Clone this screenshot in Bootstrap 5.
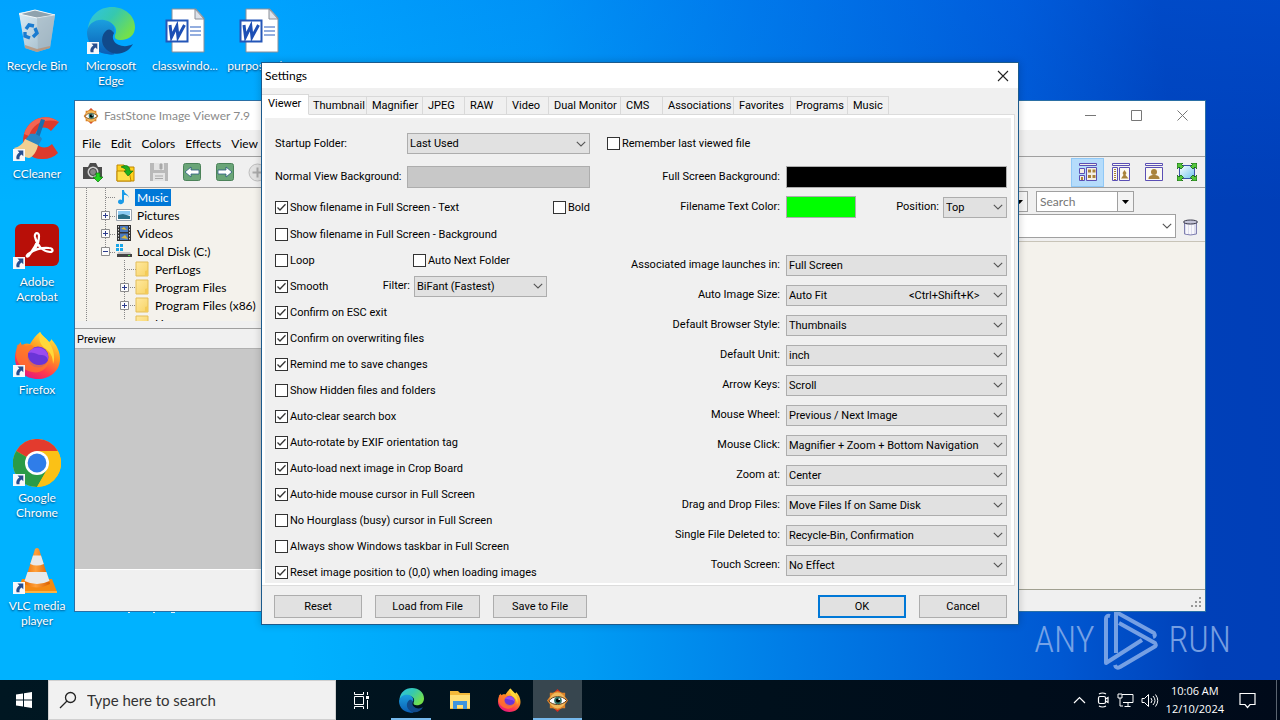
<!DOCTYPE html>
<html lang="en">
<head>
<meta charset="utf-8">
<meta name="viewport" content="width=device-width, initial-scale=1">
<title>Desktop - FastStone Image Viewer Settings</title>
<link href="https://cdn.jsdelivr.net/npm/bootstrap@5.3.0/dist/css/bootstrap.min.css" rel="stylesheet">
<style>
  body { font: 12px/15px Lato, "Open Sans", sans-serif; color: #000; background: #001420; }
  svg { display: block; flex: none; }
  button { padding: 0; border: 0; background: none; color: inherit; font: inherit; }

  /* desktop */
  .desk { min-height: 680px; background:
      linear-gradient(180deg, rgba(0,110,255,.22) 0, rgba(0,110,255,0) 30%),
      linear-gradient(86deg, #00b2ff 0, #00b2ff 22%, #009cf4 44%, #007ce6 60%, #0058d2 80%, #0040b8 91%, #003eb8 100%); }
  .desk-icons { display: grid; grid-template-columns: repeat(4, 74px); grid-template-rows: repeat(6, 108px); grid-auto-flow: column; }
  .desk-icon { padding-top: 7px; color: #fff; text-align: center; text-decoration: none; text-shadow: 0 1px 2px rgba(0,20,60,.7); }
  .desk-icon svg { margin: 0 auto 3px; }
  .desk-icon span { display: block; }
  .hidden-label { left: 128px; top: 610px; }

  /* image viewer window */
  .viewer { top: 100px; left: 74px; right: 74px; background: #f0f0f0; border: 1px solid #2a6fa5; }
  .viewer .bar-title { height: 29px; background: #fff; color: #8a8a8a; padding-left: 8px; gap: 5px; }
  .win-btn { width: 46px; height: 28px; display: flex; align-items: center; justify-content: center; }
  .viewer .bar-menu { height: 27px; border-bottom: 1px solid #a0a0a0; padding-left: 1px; }
  .viewer .bar-menu button { padding: 0 6px; }
  .viewer .bar-tools { height: 31px; border-bottom: 1px solid #a0a0a0; padding: 0 2px 0 1px; }
  .tool-btn { width: 33px; height: 29px; display: flex; align-items: center; justify-content: center; }
  .tool-btn.on { background: #b5dcfb; border: 1px solid #90c8f6; }
  .side { width: 300px; border-right: 1px solid #a0a0a0; }
  .tree { height: 133px; overflow: hidden; background: #f4f2ec; position: relative; }
  .tree ul { position: relative; }
  .tree li { display: flex; align-items: center; height: 18px; padding-left: 26px; }
  .tree li.deep { padding-left: 45px; }
  .tree li .exp { width: 9px; margin-right: 6px; }
  .tree li.deep .exp { margin-right: 5px; }
  .tree li .lbl { padding: 1px 2px; margin-left: 3px; height: 17px; }
  .tree li .lbl.sel { background: #0078d7; color: #fff; }
  .side .cap { height: 21px; border-top: 1px solid #a0a0a0; border-bottom: 1px solid #b0b0b0; margin-top: 7px; padding: 4px 2px 2px; font: 11px/14px Roboto, sans-serif; }
  .prev { height: 221px; background: #c8c8c8; border-bottom: 1px solid #fff; }
  .side .under { height: 20px; }
  .search-row { height: 24px; padding: 3px 47px 0 0; }
  .search-row input { width: 82px; height: 21px; border: 1px solid #a0a0a0; border-radius: 0; padding: 0 3px; font: inherit; background: #fff; }
  .search-row input::placeholder { color: #757575; }
  .drop { width: 16px; height: 21px; border: 1px solid #a0a0a0; border-left: 0; display: flex; align-items: center; justify-content: center; background: #f4f4f4; }
  .path-row { height: 30px; padding-top: 2px; border-bottom: 1px solid #c8c4b8; }
  .path-row select { height: 24px; border: 1px solid #a0a0a0; border-radius: 0; flex: 1; appearance: none; background: #fff; }
  .path-row button { width: 29px; display: flex; align-items: center; justify-content: center; }
  .files { background: #f4f2ec; border-bottom: 1px solid #a0a090; }
  .status { height: 21px; }

  /* settings dialog */
  .dlg { top: 62px; left: 261px; right: 261px; margin: 0 auto; max-width: 900px; background: #f0f0f0; border: 1px solid #1c5a8c; font: 11px/14px Roboto, "Open Sans", sans-serif; box-shadow: 0 0 8px rgba(0,0,0,.2); }
  .dlg .bar-title { height: 25px; background: #fff; padding: 0 9px 0 3px; font: 12px/15px Lato, sans-serif; }
  .dlg .nav-tabs { border: 0; padding-top: 6px; align-items: flex-end; margin-bottom: -1px; position: relative; flex-wrap: nowrap; }
  .dlg .nav-tabs .nav-link { height: 19px; margin: 0; border: 1px solid #d9d9d9; border-left: 0; border-radius: 0; padding: 0 5px; min-width: 42px; color: #000; text-align: left; white-space: nowrap; background: #f0f0f0; }
  .dlg .nav-tabs .nav-link.active { height: 21px; min-width: 47px; background: #fff; border-bottom-color: #fff; padding: 0 6px 2px; }
  .dlg .nav-tabs .nav-link.last { min-width: 40px; }
  .w57 { width: 57px; } .w58 { width: 58px; } .w72 { width: 72px; } .w56 { width: 56px; } .w71 { width: 71px; }
  .dlg .page { margin-right: 3px; border: 1px solid #dcdcdc; border-width: 1px 1px 1px 0; padding: 12px 7px 0 13px; box-shadow: inset 0 3px #fff, inset -3px 0 #fff, inset 0 -2px #fff, inset 3px 0 #fff; }
  .fields-left { width: 315px; }
  .fields-right { flex: 1; padding-left: 17px; }
  .r33 { height: 33px; } .r28 { height: 28px; } .r26 { height: 26px; } .r30 { height: 30px; }
  .gap-row { height: 29px; }
  .gap6 { gap: 6px; }
  .fields-left .first-lbl { width: 132px; }
  .dlg .form-check { padding: 0; margin: 0; min-height: 0; display: flex; align-items: center; gap: 2px; }
  .dlg .form-check label { padding-top: 1px; }
  .loop { width: 138px; }
  .dlg .form-check-input { float: none; margin: 0; width: 13px; height: 13px; border: 1px solid #333; border-radius: 0; background-color: #fff; flex: none; }
  .dlg .form-check-input:checked { background: #fff url("data:image/svg+xml,%3Csvg xmlns='http://www.w3.org/2000/svg' viewBox='0 0 11 11'%3E%3Cpath d='M1.5 5.5 4 8 9.5 2.3' fill='none' stroke='%23333' stroke-width='1.3'/%3E%3C/svg%3E") center/11px no-repeat; }
  .combo { height: 21px; padding: 1px 20px 0 2px; border: 1px solid #adadad; border-radius: 0; color: #000; font: inherit; appearance: none; background: #e1e1e1 url("data:image/svg+xml,%3Csvg xmlns='http://www.w3.org/2000/svg' viewBox='0 0 10 6'%3E%3Cpath d='M.8.8 5 5 9.2.8' fill='none' stroke='%23555' stroke-width='1.1'/%3E%3C/svg%3E") right 3px center/10px 6px no-repeat; }
  .path-row .white-combo { background: #fff url("data:image/svg+xml,%3Csvg xmlns='http://www.w3.org/2000/svg' viewBox='0 0 10 6'%3E%3Cpath d='M.8.8 5 5 9.2.8' fill='none' stroke='%23555' stroke-width='1.1'/%3E%3C/svg%3E") right 3px center/10px 6px no-repeat; }
  .w183 { width: 183px; } .w133 { width: 133px; } .w64 { width: 64px; } .w221 { width: 221px; }
  #filter { margin-right: 43px; }
  .swatch { height: 22px; border: 1px solid #adadad; }
  .sw-gray { background: #c8c8c8; } .sw-black { background: #000; } .sw-green { background: #0f0; width: 70px; }
  .dlg .foot { padding: 9px 11px 6px 12px; gap: 13px; }
  .push { height: 23px; background: #e1e1e1; border: 1px solid #adadad; border-radius: 0; padding: 0; font: inherit; color: #000; width: 88px; }
  .push.w105 { width: 105px; } .push.w94 { width: 94px; }
  .push.main { border: 2px solid #0078d7; }

  .brand { right: 49px; bottom: 8px; color: #93b5ec; opacity: .8; font: 300 36px/44px "Roboto Condensed", sans-serif; gap: 8px; }

  /* taskbar */
  .taskbar { height: 40px; background: linear-gradient(90deg, #001722, #00101c 60%, #000a1a); color: #fff; }
  .taskbar .start { width: 48px; }
  .taskbar .find { width: 288px; background: #f1f1f1; border: 1px solid #d0d0d0; padding-left: 10px; gap: 10px; margin-right: 1px; }
  .taskbar .find input { border: 0; background: none; outline: 0; font: 15px/20px Lato, sans-serif; width: 230px; padding: 0; }
  .taskbar .find input::placeholder { color: #333; opacity: 1; }
  .task { width: 49px; display: flex; align-items: center; justify-content: center; border-bottom: 2px solid transparent; border-top: 2px solid transparent; }
  .task.open { width: 40px; margin: 0 4px 0 5px; border-bottom-color: #76b9ed; }
  .task.current { background: #37464f; border-bottom-color: #76b9ed; }
  .tray { gap: 7px; padding-right: 3px; }
  .clock { font: 11px/18px "Open Sans", sans-serif; text-align: center; }
  .peek { border-left: 1px solid #5a6470; height: 40px; margin-left: 13px; }
</style>
</head>
<body class="d-flex flex-column min-vh-100 overflow-hidden">

<svg width="0" height="0" class="position-absolute" aria-hidden="true">
  <defs>
    <linearGradient id="gEdgeG" x1="0" y1="0" x2="1" y2=".6"><stop offset="0" stop-color="#2fc3e8"/><stop offset=".5" stop-color="#35c8b0"/><stop offset="1" stop-color="#74e04a"/></linearGradient>
    <linearGradient id="gEdgeB" x1="0" y1="0" x2="0" y2="1"><stop offset="0" stop-color="#1b9fdf"/><stop offset="1" stop-color="#0b5db4"/></linearGradient>
    <linearGradient id="gFox" x1=".8" y1="0" x2=".3" y2="1"><stop offset="0" stop-color="#fff14a"/><stop offset=".4" stop-color="#ff9a1f"/><stop offset=".75" stop-color="#ff3a4f"/><stop offset="1" stop-color="#e2167e"/></linearGradient>
    <linearGradient id="gFold" x1="0" y1="0" x2="1" y2="1"><stop offset="0" stop-color="#ffe9a0"/><stop offset="1" stop-color="#f7d365"/></linearGradient>
    <linearGradient id="gCone" x1="0" y1="0" x2="1" y2="0"><stop offset="0" stop-color="#e86a00"/><stop offset=".45" stop-color="#ffa03a"/><stop offset="1" stop-color="#d95f00"/></linearGradient>
    <linearGradient id="gBin" x1="0" y1="0" x2="1" y2="1"><stop offset="0" stop-color="#eef3f6"/><stop offset="1" stop-color="#aab7c0"/></linearGradient>
    <linearGradient id="gSky" x1="0" y1="0" x2="1" y2="1"><stop offset="0" stop-color="#fff"/><stop offset="1" stop-color="#6cc4ee"/></linearGradient>

    <symbol id="shortcut" viewBox="0 0 12 12"><path d="M0 0h12v12H0z" fill="#f6f8fb"/><path d="M4.500 1.500h5.800v5.800L8.500 5.500C6.600 6.700 6.200 8 6.600 10.300H3.600C2.600 7.200 4 5 6.400 3.400z" fill="#274e8e"/></symbol>
    <symbol id="edge" viewBox="0 0 48 48">
      <path d="M1 22C2 9 12 0 25 0c13 0 23 9 23 20 0 8-6 13-14 13-5 0-7-2-6-5 3-5 0-12-8-13C11 14 4 17 1 22z" fill="url(#gEdgeG)"/>
      <path d="M0 25c1-8 8-13 17-12 9 1 12 8 10 14-5-2-10 2-9 8 1 5 5 9 10 12-2 1-5 1-8 0C9 46 0 37 0 25z" fill="url(#gEdgeB)"/>
      <path d="M20 23c-7 5-7 17 3 22 8 4 18 1 23-8-7 4-16 2-19-3-2-3-1-6 0-8-3-4-5-4-7-3z" fill="#114a8b"/>
    </symbol>
    <symbol id="fox" viewBox="0 0 48 48">
      <path d="M27 1c2 4 6 6 9 10 2-1 2-2 2-3 6 6 9 13 9 20 0 12-10 20-22 20C12 48 2 39 2 27c0-6 2-12 6-16 0 2 0 3 1 4 2-3 5-3 8-2 3-5 6-9 10-12z" fill="url(#gFox)"/>
      <path d="M27 1c2 4 6 6 9 10 3 5 7 13 4 22 0-8-3-12-7-15-6-4-8-10-6-17z" fill="#ffd83a"/>
      <circle cx="25" cy="26" r="10.500" fill="#6a35d8"/><path d="M15 22c3-5 10-7 15-4 4 2 6 6 5 11-1-4-4-5-7-5-4 0-7-4-13-2z" fill="#9a4bf0"/>
      <path d="M4 14c3-1 6-1 9 1 3-1 5-2 8 1-1 3-5 3-6 6-1 6 4 12 11 12 4 0 8-2 10-5-1 9-9 14-17 12C9 39 3 31 3 24z" fill="#ff7a28" opacity=".75"/>
    </symbol>
    <symbol id="faststone" viewBox="0 0 24 24">
      <path d="M12 0l4 4H8zM12 24l4-4H8z" fill="#d22c1f"/><path d="M12 2l5 2h3v4l3 4-3 4v4h-3l-5 2-5-2H4v-4l-3-4 3-4V4h3z" fill="#dd8228"/><circle cx="12" cy="12" r="8.300" fill="#f0b95c"/>
      <path d="M3 12.500C7 6.500 17 6.500 21.500 12 17 17.500 7 17.500 3 12.500z" fill="#fff" stroke="#5a3413"/><circle cx="12.500" cy="12" r="4" fill="#2f7468"/><circle cx="12.500" cy="12" r="2.200" fill="#000"/><circle cx="13.800" cy="10.600" r=".9" fill="#fff"/>
    </symbol>
    <symbol id="word" viewBox="0 0 40 46">
      <path d="M7 1h24l8 9v34H7z" fill="#fff" stroke="#8a8f98"/><path d="M30 1v10h9z" fill="#dde2ea" stroke="#8a8f98"/>
      <path d="M25 19h11M25 23h11M25 27h11" stroke="#2b5fc0" stroke-width="1.200"/>
      <path d="M1.500 12.500h21v21h-21z" fill="#fff" stroke="#2456b8" stroke-width="2"/>
      <path d="M5 17l1.500 12L11.800 18l1.200 11L19.500 17" fill="none" stroke="#1d4fb5" stroke-width="3"/>
    </symbol>
    <symbol id="folder" viewBox="0 0 14 16"><path d="M1 1h12v14H1z" fill="url(#gFold)" stroke="#e3bd58"/><path d="M10 15V10l3-1v6z" fill="#f3cb58"/></symbol>
    <symbol id="plus" viewBox="0 0 9 9"><path d="M.5.5h8v8h-8z" fill="#fbfbfb" stroke="#8c8c8c"/><path d="M2 4.500h5M4.500 2v5" stroke="#2b3b8c"/></symbol>
    <symbol id="minus" viewBox="0 0 9 9"><path d="M.5.5h8v8h-8z" fill="#fbfbfb" stroke="#8c8c8c"/><path d="M2 4.500h5" stroke="#2b3b8c"/></symbol>
  </defs>
</svg>

<main class="desk flex-grow-1 position-relative">
  <div class="desk-icons">
    <a href="#" class="desk-icon">
      <svg width="48" height="48" viewBox="0 0 48 48"><path d="M6 6l16-3 20 5-5 33-13 4-12-4z" fill="url(#gBin)" opacity=".92"/><path d="M6 7l18 4 18-3-20-5z" fill="#8fa2ae" stroke="#f4f8fa"/><path d="M24 11l1 33 12-3 5-33z" fill="#9eb0bc" opacity=".55"/><path d="M12 38l12 4 13-3v2l-13 4-12-4z" fill="#b88a6a" opacity=".7"/><g fill="none" stroke="#1a7bd0" stroke-width="3.400"><path d="M13 22l3-4 5 1M22 21l2 5-4 4M17 31l-5-2 0-4"/></g></svg>
      <span>Recycle Bin</span></a>
    <a href="#" class="desk-icon">
      <svg width="48" height="48" viewBox="0 0 48 48"><path d="M46 7C35-2 16 2 11 19c-4 14 6 26 19 25 6 0 11-2 15-6l-6-9c-7 7-17 3-17-7 0-9 10-13 16-6z" fill="#dd3a2c"/><path d="M46 7C35-2 16 2 11 19l5 2C20 7 34 3 46 7z" fill="#f26552"/><path d="M28 4l4 1-7 21-4-1z" fill="#1b6fae"/><path d="M17 19c4-1 10 1 12 5l-4 7-13-6z" fill="#2886c4"/><path d="M12 24l13 6c-1 6-5 12-9 13C10 42 4 38 1 33c5-1 9-4 11-9z" fill="#f1cf93"/><use href="#shortcut" x="0" y="34" width="12" height="12"/></svg>
      <span>CCleaner</span></a>
    <a href="#" class="desk-icon">
      <svg width="48" height="48" viewBox="0 0 48 48"><rect x="2" y="1" width="44" height="42" rx="6" fill="#b80f08"/><path d="M15 32c7-3 12-10 12-19 0-4-5-4-4 1 2 8 7 14 15 15 4 0 3-4-1-4-7-1-16 2-21 6-3 3 0 4 2 0 3-4 6-9 8-14" fill="none" stroke="#fff" stroke-width="2.200" transform="translate(-1 0)"/><use href="#shortcut" x="0" y="34" width="12" height="12"/></svg>
      <span>Adobe</span><span>Acrobat</span></a>
    <a href="#" class="desk-icon">
      <svg width="48" height="48" viewBox="0 0 48 48"><use href="#fox" width="48" height="48"/><use href="#shortcut" x="0" y="34" width="12" height="12"/></svg>
      <span>Firefox</span></a>
    <a href="#" class="desk-icon">
      <svg width="48" height="48" viewBox="0 0 48 48"><circle cx="24" cy="24" r="24" fill="#fbc116"/><path d="M24 24L3.200 12A24 24 0 0 1 44.800 12z" fill="#e33b2e"/><path d="M3.200 12A24 24 0 0 0 24 48L34.400 30 24 24z" fill="#2a9b47"/><path d="M24 12h20.800A24 24 0 0 1 24 48l10.400-18z" fill="#fbc116"/><circle cx="24" cy="24" r="12" fill="#fff"/><circle cx="24" cy="24" r="9.400" fill="#2f7de9"/><use href="#shortcut" x="0" y="35" width="12" height="12"/></svg>
      <span>Google</span><span>Chrome</span></a>
    <a href="#" class="desk-icon">
      <svg width="48" height="48" viewBox="0 0 48 48"><path d="M9 32h30l5 13H4z" fill="#f58a12"/><path d="M4 44h40v2H4z" fill="#ffb340"/><path d="M22 2q2-2 4 0l11 35q-13 7-26 0z" fill="url(#gCone)"/><path d="M20 8.500h8l2.800 8.500q-7 3-13.600 0zM14.500 25h19l3 9q-12.500 6-25 0z" fill="#e9e9e9"/><use href="#shortcut" x="0" y="35" width="12" height="12"/></svg>
      <span>VLC media</span><span>player</span></a>
    <a href="#" class="desk-icon">
      <svg width="48" height="48" viewBox="0 0 48 48"><use href="#edge" width="48" height="48"/><use href="#shortcut" x="0" y="35" width="12" height="12"/></svg>
      <span>Microsoft</span><span>Edge</span></a>
    <span></span><span></span><span></span><span></span><span></span>
    <a href="#" class="desk-icon"><svg width="40" height="48" viewBox="0 0 40 48"><use href="#word" width="40" height="46" y="1"/></svg><span>classwindo...</span></a>
    <span></span><span></span><span></span><span></span><span></span>
    <a href="#" class="desk-icon"><svg width="40" height="48" viewBox="0 0 40 48"><use href="#word" width="40" height="46" y="1"/></svg><span>purposesd...</span></a>
  </div>
  <svg class="hidden-label position-absolute" width="50" height="4"><path d="M0 2.500h2M25 2.500h2M36 1.500h3M43 2.500h4" stroke="#e6f6ff"/></svg>

  <div class="brand position-absolute d-flex align-items-center">
    <span>ANY</span>
    <svg width="58" height="64" viewBox="0 0 58 64" fill="none" stroke="#93b5ec" stroke-width="4" stroke-linejoin="round"><path d="M8 8q-4-1-4 3v44l36-23M14 45V4l38 21q2 3 -1 4M17 15l36 20q2 3-1 4L18 59q-4 2-5-2"/></svg>
    <span>RUN</span>
  </div>

  <section class="viewer position-absolute">
    <div class="bar-title d-flex align-items-center">
      <svg width="16" height="16"><use href="#faststone"/></svg>
      <span>FastStone Image Viewer 7.9</span>
      <div class="ms-auto d-flex align-items-center">
        <button class="win-btn" aria-label="Minimize"><svg width="11" height="11"><path d="M0 5.500h11" stroke="#777"/></svg></button>
        <button class="win-btn" aria-label="Maximize"><svg width="11" height="11"><path d="M.5.5h10v10H.5z" fill="none" stroke="#777"/></svg></button>
        <button class="win-btn" aria-label="Close"><svg width="11" height="11"><path d="M.5.5l10 10M10.500.5l-10 10" stroke="#777"/></svg></button>
      </div>
    </div>
    <nav class="bar-menu d-flex align-items-center">
      <button>File</button><button class="px-1">Edit</button><button>Colors</button><button class="px-1">Effects</button><button>View</button>
    </nav>
    <div class="bar-tools d-flex align-items-center">
      <div class="d-flex pe-5">
        <button class="tool-btn" aria-label="Acquire"><svg width="21" height="20" viewBox="0 0 21 20"><path d="M1 5h5l2-4h6l2 4h4v12H1z" fill="#4c4c4c"/><circle cx="11" cy="10" r="5.500" fill="#d0d0d0"/><circle cx="11" cy="10" r="3.500" fill="#888" stroke="#444"/><path d="M14 11h4v4h3l-5 5-5-5h3z" fill="#24d41f" stroke="#0a7a0a" stroke-width=".7"/></svg></button>
        <button class="tool-btn" aria-label="Open"><svg width="19" height="19" viewBox="0 0 19 19"><path d="M1 2h7l2 2h8v14H1z" fill="#ffd21e" stroke="#c08700"/><path d="M1 8h12l2 10H1z" fill="#ffe04a" stroke="#c08700"/><path d="M5 4c5-3 9-1 9 4h3l-5 5-4-5h2c0-2-2-3-5-4z" fill="#1fae1f" stroke="#0b6d0b" stroke-width=".6"/></svg></button>
        <button class="tool-btn" aria-label="Save" disabled><svg width="18" height="18" viewBox="0 0 18 18"><path d="M0 0h18v18H0z" fill="#b9b9b9"/><path d="M4 0h10v7H4zM3 10h12v8H3z" fill="#e4e4e4"/><path d="M10 1h2v5h-2zM5 13h8M5 15.500h8" stroke="#a8a8a8" fill="#a8a8a8"/></svg></button>
        <button class="tool-btn" aria-label="Previous"><svg width="18" height="18" viewBox="0 0 18 18"><rect x=".5" y=".5" width="17" height="17" rx="2" fill="#6aa578" stroke="#4b8259"/><path d="M2 9l6-5v3h8v4H8v3z" fill="#fff" stroke="#2c5a80" stroke-width=".8"/></svg></button>
        <button class="tool-btn" aria-label="Next"><svg width="18" height="18" viewBox="0 0 18 18"><rect x=".5" y=".5" width="17" height="17" rx="2" fill="#6aa578" stroke="#4b8259"/><path d="M16 9l-6-5v3H2v4h8v3z" fill="#fff" stroke="#2c5a80" stroke-width=".8"/></svg></button>
        <button class="tool-btn" aria-label="Zoom in" disabled><svg width="19" height="19" viewBox="0 0 19 19"><circle cx="9.500" cy="9.500" r="8.500" fill="#e2e2e2" stroke="#bdbdbd"/><path d="M4.500 9.500h10M9.500 4.500v10" stroke="#aaa" stroke-width="2"/></svg></button>
      </div>
      <div class="d-flex ms-auto">
        <button class="tool-btn on" aria-label="Thumbnails"><svg width="18" height="18" viewBox="0 0 18 18" fill="none" stroke="#5b4fb5"><path d="M.5.5h17v2H.5zM.5 5.500h5v5h-5zM.5 12.500h5v5h-5zM7.500 4.500h10v13h-10z" fill="#f3efe4"/><path d="M9 6.500h3v3H9zM13.500 6.500h3v3h-3zM9 12h3v3H9zM13.500 12h3v3h-3zM2 14h2v3H2z" fill="#a9833a" stroke="none"/></svg></button>
        <button class="tool-btn" aria-label="Windows view"><svg width="18" height="18" viewBox="0 0 18 18" fill="none" stroke="#5b4fb5"><path d="M.5.5h17v2H.5zM.5 4.500h5v13h-5zM7.500 4.500h10v13h-10z" fill="#fbf9f2"/><path d="M3 6v11" stroke="#a9833a" stroke-width="2" stroke-dasharray="1 1"/><path d="M12.500 7l2 3-1 2 3 3.500H9l2.500-3.500-1-2z" fill="#a9833a" stroke="none"/></svg></button>
        <button class="tool-btn" aria-label="Preview view"><svg width="18" height="18" viewBox="0 0 18 18" fill="none" stroke="#5b4fb5"><path d="M.5.5h17v2H.5zM.5 4.500h17v13H.5z" fill="#fbf9f2"/><circle cx="9" cy="9" r="3" fill="#a9833a" stroke="none"/><path d="M3.500 16c0-3 2-4 5.500-4s5.500 1 5.500 4z" fill="#a9833a" stroke="none"/></svg></button>
        <button class="tool-btn" aria-label="Full screen"><svg width="20" height="18" viewBox="0 0 20 18"><path d="M2.500 2.500h15v13h-15z" fill="url(#gSky)" stroke="#3b52a8"/><path d="M0 0h6L4.500 1.500 6.500 3.500 4 6 2 4 0 6zM20 0v6l-2-2-2 2-2.500-2.500 2-2L14 0zM0 18v-6l2 2 2-2 2.500 2.500-2 2L6 18zM20 18h-6l1.500-1.500-2-2L16 12l2 2 2-2z" fill="#55c63c" stroke="#0d5c0d" stroke-width=".8"/></svg></button>
      </div>
    </div>
    <div class="d-flex align-items-stretch">
      <div class="side flex-shrink-0">
        <div class="tree">
          <svg class="position-absolute top-0 start-0" width="62" height="140" fill="none" stroke="#888" stroke-dasharray="1 1"><path d="M11.500 0v133M30.500 0v60M31 9.500h10M35 28.500h6M35 46.500h6M35 64.500h6M49.500 72v60M50 81.500h11M55 99.500h6M55 117.500h6"/></svg>
          <ul class="list-unstyled m-0">
            <li><span class="exp"></span><svg width="16" height="16"><path d="M6 1l2 0c0 4 5 4 5 8-1-3-3-3-5-3v6c0 4-6 4-6 1s3-3 4-2z" fill="#1a9be8"/></svg><span class="lbl sel">Music</span></li>
            <li><svg class="exp" width="9" height="9"><use href="#plus"/></svg><svg width="16" height="16"><path d="M.5 2.500h15v11H.5z" fill="#fff" stroke="#9aa3ad"/><path d="M2 4h12v4H2z" fill="#8ecbf2"/><path d="M2 8l5-1 7 2v3H2z" fill="#2b6f88"/></svg><span class="lbl">Pictures</span></li>
            <li><svg class="exp" width="9" height="9"><use href="#plus"/></svg><svg width="16" height="16"><path d="M1 0h14v16H1z" fill="#333"/><path d="M4 1h8v6H4zM4 8.500h8v6.500H4z" fill="#4a7ac0"/><path d="M5 4l3-2 3 3zM5 13l4-3 3 4z" fill="#d8b83a"/><path d="M2.500 1v14M13.500 1v14" stroke="#ddd" stroke-dasharray="1.500 1.500"/></svg><span class="lbl">Videos</span></li>
            <li><svg class="exp" width="9" height="9"><use href="#minus"/></svg><svg width="16" height="16"><path d="M0 1h3v3H0zM4 1h3v3H4zM0 5h3v3H0zM4 5h3v3H4z" fill="#19a7e8"/><path d="M2 9h12l2 3H1z" fill="#c5c5c5"/><path d="M1 11h15v3H1z" fill="#444"/><path d="M12 12.500h2" stroke="#4be04b"/></svg><span class="lbl">Local Disk (C:)</span></li>
            <li class="deep"><span class="exp"></span><svg width="16" height="16"><use href="#folder"/></svg><span class="lbl">PerfLogs</span></li>
            <li class="deep"><svg class="exp" width="9" height="9"><use href="#plus"/></svg><svg width="16" height="16"><use href="#folder"/></svg><span class="lbl">Program Files</span></li>
            <li class="deep"><svg class="exp" width="9" height="9"><use href="#plus"/></svg><svg width="16" height="16"><use href="#folder"/></svg><span class="lbl">Program Files (x86)</span></li>
            <li class="deep"><span class="exp"></span><svg width="16" height="16"><use href="#folder"/></svg><span class="lbl">Users</span></li>
          </ul>
        </div>
        <div class="cap">Preview</div>
        <div class="prev"></div>
        <div class="under"></div>
      </div>
      <div class="flex-grow-1 d-flex flex-column">
        <div class="search-row d-flex justify-content-end">
          <button class="drop" aria-label="History"><svg width="7" height="4"><path d="M0 0h7L3.500 4z"/></svg></button>
          <input type="text" class="ms-2" placeholder="Search" aria-label="Search">
          <button class="drop me-4" aria-label="Search options"><svg width="7" height="4"><path d="M0 0h7L3.500 4z"/></svg></button>
        </div>
        <div class="path-row d-flex">
          <select class="white-combo" aria-label="Path"><option></option></select>
          <button aria-label="Delete"><svg width="15" height="17" viewBox="0 0 15 17"><path d="M1.500 4h12v11q-6 2-12 0z" fill="#dedeee" stroke="#8080b0"/><path d="M4 6v9M7 6v9M10 6v9" stroke="#fff" stroke-width="1.500"/><ellipse cx="7.500" cy="3" rx="7" ry="2" fill="#c4c4d8" stroke="#3a3a4a"/></svg></button>
        </div>
        <div class="files flex-grow-1"></div>
      </div>
    </div>
    <div class="status d-flex justify-content-end align-items-end p-1"><svg width="11" height="11" fill="#999"><path d="M9 1h2v2H9zM5 5h2v2H5zM9 5h2v2H9zM1 9h2v2H1zM5 9h2v2H5zM9 9h2v2H9z"/></svg></div>
  </section>

  <section class="dlg position-absolute" role="dialog" aria-label="Settings">
    <div class="bar-title d-flex align-items-center justify-content-between"><span>Settings</span>
      <button aria-label="Close"><svg width="12" height="12"><path d="M1 1l10 10M11 1L1 11" stroke="#222" stroke-width="1.100"/></svg></button></div>
    <div class="nav nav-tabs" role="tablist">
      <button class="nav-link active" role="tab">Viewer</button>
      <button class="nav-link px-1 w58" role="tab">Thumbnail</button>
      <button class="nav-link w56" role="tab">Magnifier</button>
      <button class="nav-link" role="tab">JPEG</button>
      <button class="nav-link" role="tab">RAW</button>
      <button class="nav-link" role="tab">Video</button>
      <button class="nav-link w72" role="tab">Dual Monitor</button>
      <button class="nav-link" role="tab">CMS</button>
      <button class="nav-link w71" role="tab">Associations</button>
      <button class="nav-link w57" role="tab">Favorites</button>
      <button class="nav-link w57" role="tab">Programs</button>
      <button class="nav-link last" role="tab">Music</button>
    </div>
    <div class="page d-flex">
      <div class="fields-left">
        <div class="d-flex align-items-center r33"><label class="first-lbl" for="startup">Startup Folder:</label><select id="startup" class="combo w183"><option>Last Used</option></select></div>
        <div class="d-flex align-items-center r33"><label class="first-lbl" for="nbg">Normal View Background:</label><button id="nbg" class="swatch sw-gray w183" aria-label="Normal View Background"></button></div>
        <div class="d-flex align-items-center justify-content-between r28">
          <div class="form-check"><input class="form-check-input" type="checkbox" id="c1" checked><label for="c1">Show filename in Full Screen - Text</label></div>
          <div class="form-check"><input class="form-check-input" type="checkbox" id="c2"><label for="c2">Bold</label></div></div>
        <div class="form-check r26"><input class="form-check-input" type="checkbox" id="c3"><label for="c3">Show filename in Full Screen - Background</label></div>
        <div class="d-flex r26"><div class="form-check loop"><input class="form-check-input" type="checkbox" id="c4"><label for="c4">Loop</label></div>
          <div class="form-check"><input class="form-check-input" type="checkbox" id="c5"><label for="c5">Auto Next Folder</label></div></div>
        <div class="d-flex align-items-center r26"><div class="form-check me-auto"><input class="form-check-input" type="checkbox" id="c6" checked><label for="c6">Smooth</label></div>
          <label for="filter" class="me-1">Filter:</label><select id="filter" class="combo w133"><option>BiFant (Fastest)</option></select></div>
        <div class="form-check r26"><input class="form-check-input" type="checkbox" id="c7" checked><label for="c7">Confirm on ESC exit</label></div>
        <div class="form-check r26"><input class="form-check-input" type="checkbox" id="c8" checked><label for="c8">Confirm on overwriting files</label></div>
        <div class="form-check r26"><input class="form-check-input" type="checkbox" id="c9" checked><label for="c9">Remind me to save changes</label></div>
        <div class="form-check r26"><input class="form-check-input" type="checkbox" id="c10"><label for="c10">Show Hidden files and folders</label></div>
        <div class="form-check r26"><input class="form-check-input" type="checkbox" id="c11" checked><label for="c11">Auto-clear search box</label></div>
        <div class="form-check r26"><input class="form-check-input" type="checkbox" id="c12" checked><label for="c12">Auto-rotate by EXIF orientation tag</label></div>
        <div class="form-check r26"><input class="form-check-input" type="checkbox" id="c13" checked><label for="c13">Auto-load next image in Crop Board</label></div>
        <div class="form-check r26"><input class="form-check-input" type="checkbox" id="c14" checked><label for="c14">Auto-hide mouse cursor in Full Screen</label></div>
        <div class="form-check r26"><input class="form-check-input" type="checkbox" id="c15"><label for="c15">No Hourglass (busy) cursor in Full Screen</label></div>
        <div class="form-check r26"><input class="form-check-input" type="checkbox" id="c16"><label for="c16">Always show Windows taskbar in Full Screen</label></div>
        <div class="form-check r26"><input class="form-check-input" type="checkbox" id="c17" checked><label for="c17">Reset image position to (0,0) when loading images</label></div>
      </div>
      <div class="fields-right">
        <div class="form-check r33"><input class="form-check-input" type="checkbox" id="c18"><label for="c18">Remember last viewed file</label></div>
        <div class="d-flex align-items-center justify-content-end gap6 r33"><label for="fbg">Full Screen Background:</label><button id="fbg" class="swatch sw-black w221" aria-label="Full Screen Background"></button></div>
        <div class="d-flex align-items-center justify-content-end gap6 r28"><label for="ftc">Filename Text Color:</label>
          <div class="w221 d-flex align-items-center"><button id="ftc" class="swatch sw-green me-auto" aria-label="Filename Text Color"></button><label for="pos" class="me-1">Position:</label><select id="pos" class="combo w64"><option>Top</option></select></div></div>
        <div class="gap-row"></div>
        <div class="d-flex align-items-center justify-content-end gap6 r30"><label for="s1">Associated image launches in:</label><select id="s1" class="combo w221"><option>Full Screen</option></select></div>
        <div class="d-flex align-items-center justify-content-end gap6 r30"><label for="s2">Auto Image Size:</label><select id="s2" class="combo w221"><option>Auto Fit&nbsp;&nbsp;&nbsp;&nbsp;&nbsp;&nbsp;&nbsp;&nbsp;&nbsp;&nbsp;&nbsp;&nbsp;&nbsp;&nbsp;&nbsp;&nbsp;&nbsp;&nbsp;&nbsp;&nbsp;&nbsp;&nbsp;&nbsp;&nbsp;&nbsp;&nbsp;&nbsp;&nbsp;&nbsp;&nbsp;&lt;Ctrl+Shift+K&gt;</option></select></div>
        <div class="d-flex align-items-center justify-content-end gap6 r30"><label for="s3">Default Browser Style:</label><select id="s3" class="combo w221"><option>Thumbnails</option></select></div>
        <div class="d-flex align-items-center justify-content-end gap6 r30"><label for="s4">Default Unit:</label><select id="s4" class="combo w221"><option>inch</option></select></div>
        <div class="d-flex align-items-center justify-content-end gap6 r30"><label for="s5">Arrow Keys:</label><select id="s5" class="combo w221"><option>Scroll</option></select></div>
        <div class="d-flex align-items-center justify-content-end gap6 r30"><label for="s6">Mouse Wheel:</label><select id="s6" class="combo w221"><option>Previous / Next Image</option></select></div>
        <div class="d-flex align-items-center justify-content-end gap6 r30"><label for="s7">Mouse Click:</label><select id="s7" class="combo w221"><option>Magnifier + Zoom + Bottom Navigation</option></select></div>
        <div class="d-flex align-items-center justify-content-end gap6 r30"><label for="s8">Zoom at:</label><select id="s8" class="combo w221"><option>Center</option></select></div>
        <div class="d-flex align-items-center justify-content-end gap6 r30"><label for="s9">Drag and Drop Files:</label><select id="s9" class="combo w221"><option>Move Files If on Same Disk</option></select></div>
        <div class="d-flex align-items-center justify-content-end gap6 r30"><label for="s10">Single File Deleted to:</label><select id="s10" class="combo w221"><option>Recycle-Bin, Confirmation</option></select></div>
        <div class="d-flex align-items-center justify-content-end gap6 r30"><label for="s11">Touch Screen:</label><select id="s11" class="combo w221"><option>No Effect</option></select></div>
      </div>
    </div>
    <div class="foot d-flex">
      <button class="push">Reset</button><button class="push w105">Load from File</button><button class="push w94">Save to File</button>
      <button class="push main ms-auto">OK</button><button class="push">Cancel</button>
    </div>
  </section>
</main>

<footer class="taskbar d-flex align-items-stretch">
  <button class="start d-flex align-items-center justify-content-center" aria-label="Start"><svg width="16" height="16" fill="#fff"><path d="M0 2.500l7-1v6H0zM8 1.300L16 0v7.500H8zM0 8.500h7v6l-7-1zM8 8.500h8V16l-8-1.300z"/></svg></button>
  <div class="find d-flex align-items-center"><svg width="18" height="18" fill="none" stroke="#222" stroke-width="1.300"><circle cx="11.500" cy="6.500" r="5"/><path d="M8 10L1 17"/></svg><input type="text" placeholder="Type here to search" aria-label="Type here to search"></div>
  <button class="task" aria-label="Task view"><svg width="17" height="17" fill="none" stroke="#fff"><path d="M1.500 4.500h9v8h-9zM1.500 0v2.500h9V0M1.500 17v-2.500h9V17M14.500 0v3M14.500 8v9"/><path d="M13 4h3v3h-3z" fill="#fff" stroke="none"/></svg></button>
  <button class="task open" aria-label="Microsoft Edge"><svg width="25" height="25"><use href="#edge"/></svg></button>
  <button class="task" aria-label="File Explorer"><svg width="22" height="20" viewBox="0 0 22 20"><path d="M1 1h8l2 2h10v16H1z" fill="#f3b93a"/><path d="M1 5h20v13H1z" fill="#ffdf76"/><path d="M4 19v-8h14v8h-4v-4H8v4z" fill="#3f94dd"/></svg></button>
  <button class="task" aria-label="Firefox"><svg width="24" height="24"><use href="#fox"/></svg></button>
  <button class="task current" aria-label="FastStone Image Viewer"><svg width="23" height="25"><use href="#faststone"/></svg></button>
  <div class="tray d-flex align-items-center ms-auto">
    <svg width="13" height="8" fill="none" stroke="#fff" stroke-width="1.200"><path d="M1 7l5.500-5.500L12 7"/></svg>
    <svg class="ms-1" width="13" height="16" fill="none" stroke="#fff" stroke-width="1.200"><rect x="1.500" y="4.500" width="7" height="7" rx="1.500"/><path d="M8.500 7l2.500-1.500v5L8.500 9M2 2q3.500-2 7 0M2 14q3.500 2 7 0"/></svg>
    <svg width="17" height="14" fill="none" stroke="#fff"><path d="M5 1.500h11v8H6M11 9.500v4M7.500 13.500h6M1 1h4v4H1zM3 5v8h3"/></svg>
    <svg width="18" height="15" fill="none" stroke="#fff"><path d="M1 5.500h2.500l4-4v12l-4-4H1zM10 5q2 2.500 0 5M12 3q4 4.500 0 9M14.500 1.500q4.500 6 0 12"/></svg>
    <div class="clock">10:06 AM<br>12/10/2024</div>
    <svg class="ms-2" width="17" height="17" fill="none" stroke="#fff" stroke-width="1.200"><path d="M1 1.500h15v11h-5l-2.500 3-2.500-3H1z"/></svg>
    <div class="peek"></div>
  </div>
</footer>

<script src="https://cdn.jsdelivr.net/npm/bootstrap@5.3.0/dist/js/bootstrap.bundle.min.js"></script>
</body>
</html>
